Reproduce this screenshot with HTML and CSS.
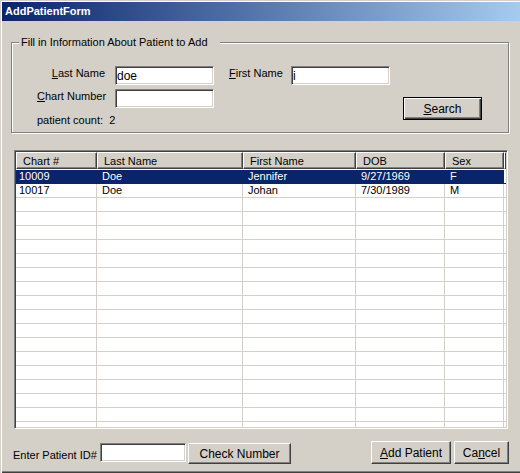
FILE: index.html
```html
<!DOCTYPE html>
<html>
<head>
    <meta charset="utf-8" />
    <title>AddPatientForm</title>
    <link rel="stylesheet" href="styles.css">
</head>
<body>
    <div class="window">
        <div class="titlebar">AddPatientForm</div>

        <fieldset class="keresoDoboz">
            <legend>Fill in Information About Patient to Add</legend>
            <div class="kereso">
                <label class="lbl lbl-last" for="lastName"><u>L</u>ast Name</label>
                <input id="lastName" class="mezo mezo-last" type="text" value="doe" />
                <label class="lbl lbl-first" for="firstName"><u>F</u>irst Name</label>
                <input id="firstName" class="mezo mezo-first" type="text" value="i" />
                <label class="lbl lbl-chart" for="chartNo"><u>C</u>hart Number</label>
                <input id="chartNo" class="mezo mezo-chart" type="text" />
                <button class="gomb gomb-alap kereses"><u>S</u>earch</button>
                <div class="szamlalo">patient count:&nbsp; 2</div>
            </div>
        </fieldset>

        <div class="lista">
            <div class="sor fejlec">
                <div class="cella c1">Chart #</div>
                <div class="cella c2">Last Name</div>
                <div class="cella c3">First Name</div>
                <div class="cella c4">DOB</div>
                <div class="cella c5">Sex</div>
                <div class="cella c6"></div>
            </div>
            <div class="torzs" id="torzs">
                <div class="sor kijelolt">
                    <div class="cella c1">10009</div>
                    <div class="cella c2">Doe</div>
                    <div class="cella c3">Jennifer</div>
                    <div class="cella c4">9/27/1969</div>
                    <div class="cella c5">F</div>
                </div>
                <div class="sor">
                    <div class="cella c1">10017</div>
                    <div class="cella c2">Doe</div>
                    <div class="cella c3">Johan</div>
                    <div class="cella c4">7/30/1989</div>
                    <div class="cella c5">M</div>
                </div>
            </div>
        </div>

        <div class="also">
            <label class="lbl lbl-id" for="patientId">Enter Patient ID#</label>
            <input id="patientId" class="mezo mezo-id" type="text" />
            <button class="gomb check">Check Number</button>
            <div class="kitolto"></div>
            <button class="gomb add"><u>A</u>dd Patient</button>
            <button class="gomb cancel">Ca<u>n</u>cel</button>
        </div>
    </div>

    <script>
        // ures sorok a racs kitoltesere
        var torzs = document.getElementById("torzs");
        for (var i = 0; i < 18; i++) {
            var sor = document.createElement("div");
            sor.className = "sor";
            for (var j = 1; j <= 5; j++) {
                var c = document.createElement("div");
                c.className = "cella c" + j;
                sor.appendChild(c);
            }
            torzs.appendChild(sor);
        }
    </script>
</body>
</html>
```

FILE: styles.css
```css
body {
    margin: 0;
    background-color: #d4d0c8;
}

.window {
    width: 520px;
    height: 473px;
    box-sizing: border-box;
    padding: 2px 0 2px 2px;
    background-color: #d4d0c8;
    box-shadow: inset 1px 1px #d4d0c8, inset 2px 2px #fff, inset 0 -1px #404040, inset 0 -2px #808080;
    display: flex;
    flex-direction: column;
    font-family: "Liberation Sans", Arial, sans-serif;
    font-size: 11px;
    color: #000;
    overflow: hidden;
}

.titlebar {
    height: 19px;
    line-height: 19px;
    padding-left: 3px;
    color: white;
    font-weight: bold;
    font-size: 11px;
    background: linear-gradient(to right, #0a246a, #a6caf0);
}

u {
    text-decoration: underline;
    text-underline-offset: 1px;
}

/* kereso csoport */
.keresoDoboz {
    margin: 15px 0 0 9px;
    width: 498px;
    box-sizing: border-box;
    padding: 0;
    min-inline-size: 0;
    border: 1px solid #808080;
    box-shadow: 1px 1px 0 #fff, inset 1px 1px 0 #fff;
}

.keresoDoboz legend {
    margin-left: 7px;
    padding: 0 12px 0 2px;
    line-height: 13px;
    background-color: #d4d0c8;
}

.kereso {
    display: grid;
    grid-template-columns: 103px 99px 15px 62px 99px 13px 79px;
    grid-template-rows: 19px 19px 16px;
    row-gap: 4px;
    padding: 17px 0 4px 0;
}

.lbl {
    align-self: center;
    white-space: nowrap;
}

.lbl-last {
    grid-column: 1;
    grid-row: 1;
    text-align: right;
    padding-right: 10px;
    margin-top: -5px;
}

.lbl-first {
    grid-column: 4;
    grid-row: 1;
    margin-top: -5px;
}

.lbl-chart {
    grid-column: 1;
    grid-row: 2;
    padding-left: 25px;
    margin-top: -6px;
}

.mezo {
    box-sizing: border-box;
    height: 19px;
    margin: 0;
    padding: 0 1px;
    font-family: "Liberation Sans", Arial, sans-serif;
    font-size: 12px;
    color: #000;
    background-color: #fff;
    border-style: solid;
    border-width: 1px;
    border-color: #808080 #fff #fff #808080;
    box-shadow: inset 1px 1px #404040, inset -1px -1px #d4d0c8;
    outline: none;
}

.mezo-last {
    grid-column: 2;
    grid-row: 1;
    width: 99px;
}

.mezo-first {
    grid-column: 5;
    grid-row: 1;
    width: 99px;
}

.mezo-chart {
    grid-column: 2;
    grid-row: 2;
    width: 99px;
}

.szamlalo {
    grid-column: 1;
    grid-row: 3;
    padding-left: 25px;
    white-space: nowrap;
    align-self: center;
}

.gomb {
    box-sizing: border-box;
    margin: 0;
    padding: 0;
    font-family: "Liberation Sans", Arial, sans-serif;
    font-size: 12px;
    color: #000;
    background-color: #d4d0c8;
    border-style: solid;
    border-width: 1px;
    border-color: #fff #404040 #404040 #fff;
    box-shadow: inset -1px -1px #808080;
}

.gomb-alap {
    border-color: #000;
    box-shadow: inset 1px 1px #fff, inset -1px -1px #404040, inset -2px -2px #808080;
}

.kereses {
    grid-column: 7;
    grid-row: 2 / 4;
    align-self: start;
    margin-top: 8px;
    height: 23px;
}

/* racs */
.lista {
    margin: 17px 0 0 12px;
    width: 494px;
    height: 279px;
    box-sizing: border-box;
    background-color: #fff;
    border-style: solid;
    border-width: 1px;
    border-color: #808080 #fff #fff #808080;
    box-shadow: inset 1px 1px #404040, inset -1px -1px #d4d0c8;
    padding: 1px;
    overflow: hidden;
}

.sor {
    display: flex;
    height: 14px;
    box-sizing: border-box;
    border-bottom: 1px solid #d4d0c8;
}

.cella {
    box-sizing: border-box;
    height: 13px;
    line-height: 13px;
    padding-left: 5px;
    white-space: nowrap;
    overflow: hidden;
    border-right: 1px solid #d4d0c8;
}

.c1 { width: 81px; padding-left: 3px; }
.c2 { width: 146px; }
.c3 { width: 113px; }
.c4 { width: 89px; }
.c5 { width: 59px; }
.c6 { width: 2px; padding: 0; }

.fejlec {
    height: 17px;
    border-bottom: 0;
    margin-bottom: 1px;
}

.fejlec .cella {
    height: 17px;
    line-height: 16px;
    padding-left: 6px;
    background-color: #d4d0c8;
    border-style: solid;
    border-width: 1px;
    border-color: #fff #404040 #404040 #fff;
    box-shadow: inset -1px -1px #808080;
}

.fejlec .c6 {
    padding: 0;
}

.kijelolt .cella {
    background-color: #0a246a;
    color: #fff;
    border-right-color: #0a246a;
}

.kijelolt {
    border-bottom-color: #0a246a;
}

/* also sor */
.also {
    display: flex;
    align-items: flex-start;
    margin: 12px 0 0 11px;
    width: 496px;
}

.lbl-id {
    width: 87px;
    margin-top: 5px;
}

.mezo-id {
    width: 86px;
    margin-top: 2px;
}

.check {
    width: 103px;
    height: 21px;
    margin-left: 2px;
    margin-top: 2px;
}

.kitolto {
    flex: 1;
}

.add {
    width: 80px;
    height: 23px;
}

.cancel {
    width: 55px;
    height: 23px;
    margin-left: 3px;
}
```
